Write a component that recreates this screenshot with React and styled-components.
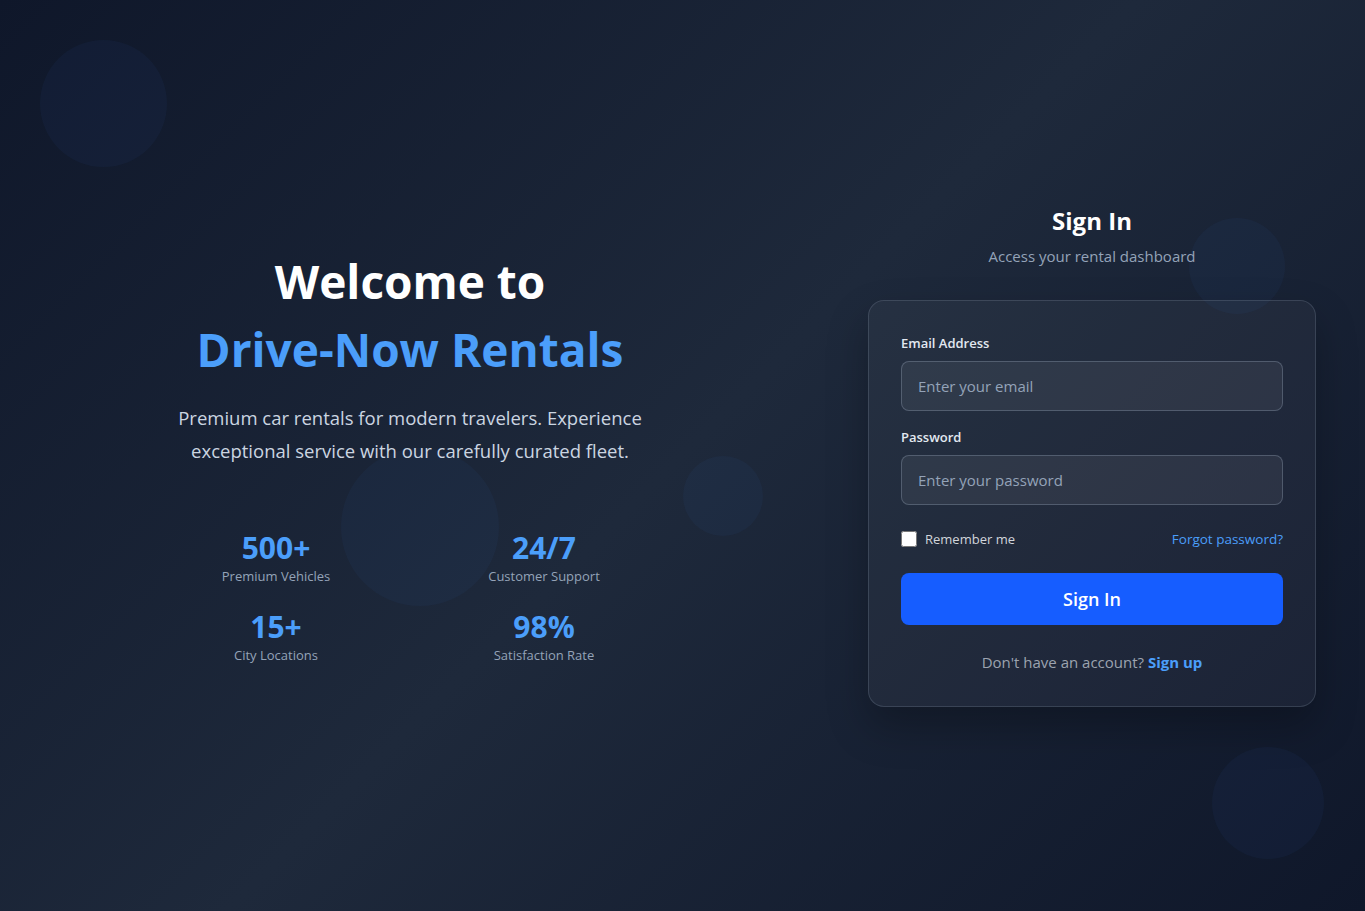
import React from "react";
import styled, { createGlobalStyle } from "styled-components";

const GlobalStyle = createGlobalStyle`
  * { box-sizing: border-box; }
  html, body { margin: 0; padding: 0; }
  body {
    font-family: "Open Sans", "Noto Sans", sans-serif;
    background: #0f172a;
  }
`;

const stats = [
  { value: "500+", label: "Premium Vehicles" },
  { value: "24/7", label: "Customer Support" },
  { value: "15+", label: "City Locations" },
  { value: "98%", label: "Satisfaction Rate" },
];

const bubbles = [
  { x: 40, y: 40, size: 127 },
  { x: 1189, y: 218, size: 96 },
  { x: 683, y: 456, size: 80 },
  { x: 341, y: 448, size: 158 },
  { x: 1212, y: 747, size: 112 },
];

const App = () => {
  return (
    <>
      <GlobalStyle />
      <Page>
        {bubbles.map((b, i) => (
          <Bubble
            key={i}
            style={{ left: b.x, top: b.y, width: b.size, height: b.size }}
          />
        ))}
        <Hero>
          <Title>
            Welcome to
            <Accent>Drive-Now Rentals</Accent>
          </Title>
          <Lead>
            Premium car rentals for modern travelers. Experience exceptional
            service with our carefully curated fleet.
          </Lead>
          <Stats>
            {stats.map((s) => (
              <Stat key={s.label}>
                <StatValue>{s.value}</StatValue>
                <StatLabel>{s.label}</StatLabel>
              </Stat>
            ))}
          </Stats>
        </Hero>

        <Side>
          <FormTitle>Sign In</FormTitle>
          <FormSubtitle>Access your rental dashboard</FormSubtitle>
          <Card>
            <Field>
              <Label>Email Address</Label>
              <Input type="email" placeholder="Enter your email" />
            </Field>
            <Field>
              <Label>Password</Label>
              <Input type="password" placeholder="Enter your password" />
            </Field>
            <OptionsRow>
              <Remember>
                <Check type="checkbox" />
                Remember me
              </Remember>
              <Link href="#">Forgot password?</Link>
            </OptionsRow>
            <SubmitButton>Sign In</SubmitButton>
            <Footer>
              Don't have an account? <StrongLink href="#">Sign up</StrongLink>
            </Footer>
          </Card>
        </Side>
      </Page>
    </>
  );
};

export default App;

const Page = styled.div`
  position: relative;
  overflow: hidden;
  min-height: 100vh;
  display: grid;
  grid-template-columns: 1fr 448px;
  column-gap: 98px;
  align-items: center;
  padding: 0 49px 0 50px;
  background: linear-gradient(135deg, #0f172a 0%, #1e293b 50%, #0f172a 100%);
`;

const Bubble = styled.div`
  position: absolute;
  border-radius: 50%;
  background: rgba(59, 130, 246, 0.045);
  pointer-events: none;
`;

const Hero = styled.section`
  position: relative;
  display: flex;
  flex-direction: column;
  align-items: center;
  text-align: center;
`;

const Title = styled.h1`
  margin: 0;
  font-size: 46px;
  line-height: 68px;
  font-weight: 700;
  color: #ffffff;
`;

const Accent = styled.span`
  display: block;
  color: #4b9efa;
`;

const Lead = styled.p`
  margin: 18px 0 0;
  max-width: 490px;
  font-size: 18.5px;
  line-height: 33px;
  color: #cbd5e1;
`;

const Stats = styled.div`
  display: grid;
  grid-template-columns: 1fr 1fr;
  width: 536px;
  row-gap: 24px;
  margin-top: 64px;
`;

const Stat = styled.div`
  display: flex;
  flex-direction: column;
  align-items: center;
`;

const StatValue = styled.div`
  font-size: 30px;
  line-height: 34px;
  font-weight: 700;
  color: #4b9efa;
`;

const StatLabel = styled.div`
  margin-top: 1px;
  font-size: 13px;
  line-height: 20px;
  color: #94a3b8;
`;

const Side = styled.section`
  position: relative;
  display: flex;
  flex-direction: column;
  align-items: stretch;
  text-align: center;
`;

const FormTitle = styled.h2`
  margin: 0;
  font-size: 24px;
  line-height: 34px;
  font-weight: 700;
  color: #ffffff;
`;

const FormSubtitle = styled.p`
  margin: 6px 0 32px;
  font-size: 15px;
  line-height: 24px;
  color: #94a3b8;
`;

const Card = styled.div`
  display: flex;
  flex-direction: column;
  padding: 32px;
  border-radius: 16px;
  border: 1px solid rgba(148, 163, 184, 0.22);
  background: rgba(255, 255, 255, 0.04);
  box-shadow: 0 20px 40px rgba(0, 0, 0, 0.25);
  text-align: left;
`;

const Field = styled.div`
  display: flex;
  flex-direction: column;
  gap: 8px;
  margin-bottom: 16px;
`;

const Label = styled.label`
  font-size: 13px;
  line-height: 20px;
  font-weight: 600;
  color: #e2e8f0;
`;

const Input = styled.input`
  height: 50px;
  padding: 0 16px;
  border-radius: 8px;
  border: 1px solid rgba(148, 163, 184, 0.35);
  background: rgba(255, 255, 255, 0.06);
  color: #fff;
  font-family: inherit;
  font-size: 15px;
  outline: none;

  &::placeholder {
    color: #94a3b8;
  }
`;

const OptionsRow = styled.div`
  display: flex;
  justify-content: space-between;
  align-items: center;
  margin-top: 8px;
  height: 20px;
`;

const Remember = styled.label`
  display: flex;
  align-items: center;
  gap: 8px;
  font-size: 13px;
  color: #d1d5db;
`;

const Check = styled.input`
  margin: 0;
  width: 16px;
  height: 16px;
`;

const Link = styled.a`
  font-size: 13.5px;
  color: #4b9efa;
  text-decoration: none;
`;

const SubmitButton = styled.button`
  margin-top: 24px;
  height: 52px;
  border: none;
  border-radius: 8px;
  background: #165dff;
  color: #ffffff;
  font-family: inherit;
  font-size: 18px;
  font-weight: 600;
  cursor: pointer;
`;

const Footer = styled.p`
  margin: 25px 0 0;
  font-size: 15px;
  line-height: 24px;
  text-align: center;
  color: #9ca3af;
`;

const StrongLink = styled.a`
  font-weight: 700;
  color: #4b9efa;
  text-decoration: none;
`;
